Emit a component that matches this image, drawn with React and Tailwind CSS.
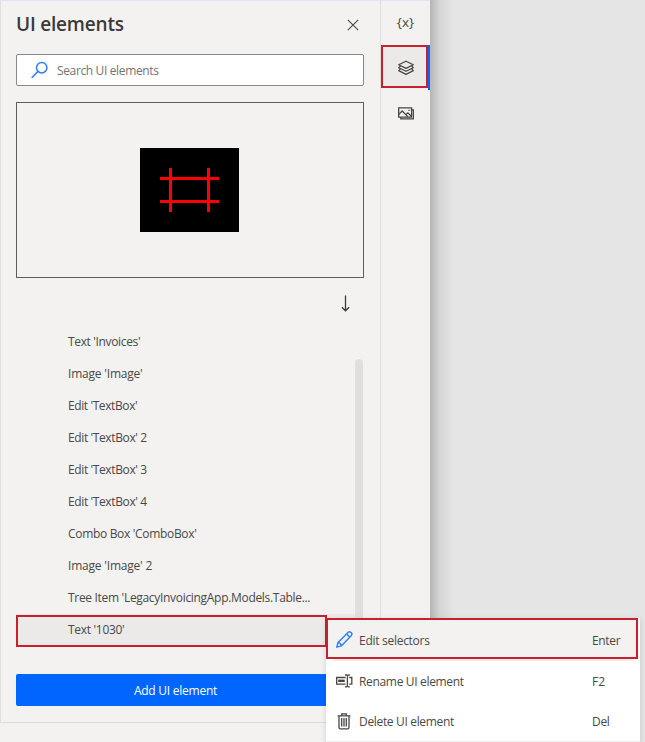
import React from "react";

const elements = [
  { label: "Text 'Invoices'", spacing: "tracking-[-0.35px]" },
  { label: "Image 'Image'", spacing: "tracking-[-0.2px]" },
  { label: "Edit 'TextBox'", spacing: "tracking-[-0.4px]" },
  { label: "Edit 'TextBox' 2", spacing: "tracking-[-0.38px]" },
  { label: "Edit 'TextBox' 3", spacing: "tracking-[-0.38px]" },
  { label: "Edit 'TextBox' 4", spacing: "tracking-[-0.38px]" },
  { label: "Combo Box 'ComboBox'", spacing: "tracking-[-0.32px]" },
  { label: "Image 'Image' 2", spacing: "tracking-[-0.2px]" },
  { label: "Tree Item 'LegacyInvoicingApp.Models.Table...", spacing: "tracking-[-0.31px]" },
];

function SearchIcon() {
  return (
    <svg width="18" height="18" viewBox="0 0 18 18" fill="none" stroke="#2b7fff" strokeWidth="1.5">
      <circle cx="10.7" cy="6.7" r="5.2" />
      <path d="M7 10.4.7 16.8" />
    </svg>
  );
}

function CloseIcon() {
  return (
    <svg width="12" height="12" viewBox="0 0 12 12" fill="none" stroke="#484644" strokeWidth="1.1">
      <path d="M.8.8l10.4 10.4M11.2.8.8 11.2" />
    </svg>
  );
}

function LayersIcon() {
  return (
    <svg width="16" height="16" viewBox="0 0 16 16" fill="none" stroke="#484644" strokeWidth="1.2" strokeLinejoin="round">
      <path d="M8 1.2 15.3 4.8 8 8.4.7 4.8Z" />
      <path d="M2.5 6 .7 7.7 8 11.3l7.3-3.6L13.5 6" />
      <path d="M2.5 8.9.7 10.6 8 14.4l7.3-3.8-1.8-1.7" />
    </svg>
  );
}

function ImagesIcon() {
  return (
    <svg width="16" height="13" viewBox="0 0 16 13" fill="none" stroke="#484644" strokeWidth="1.3">
      <path d="M.7.9h12.9v9.2H.7z" />
      <path d="M13.9 2.8h1.5v9.1H2.8v-1.7" />
      <path d="M.8 7.4 4.2 4l5.8 5.9M7.9 7.6l1.9-1.8 3.6 3.5" />
      <path d="M10.4 3.4h1.3" />
    </svg>
  );
}

function PencilIcon() {
  return (
    <svg width="17" height="17" viewBox="0 0 17 17" fill="none" stroke="#2b7fff" strokeWidth="1.4" strokeLinejoin="round">
      <path d="M.8 16.2 2 11.5 12 1.5c1-1 2.4-.8 3.2 0s1 2.1 0 3.2L5.3 14.9Z" />
      <path d="M10.6 3l3.3 3.2M2 11.5c1.8.2 3.1 1.5 3.3 3.4" />
    </svg>
  );
}

function RenameIcon() {
  return (
    <svg width="17" height="14" viewBox="0 0 17 14" fill="none" stroke="#484644" strokeWidth="1.3">
      <path d="M9.6 3.5H.7v6.6h8.9M13.2 3.5h2.6v6.6h-2.6" />
      <path d="M2.2 6.8h6.5" strokeWidth="2.4" />
      <path d="M9 1h1.5l.9.7.9-.7h1.5M11.4 1.7v10.4M9 12.8h1.5l.9-.7.9.7h1.5" />
    </svg>
  );
}

function TrashIcon() {
  return (
    <svg width="14" height="17" viewBox="0 0 14 17" fill="none" stroke="#484644" strokeWidth="1.3">
      <path d="M.6 2.9h12.8M4.7 2.6V.9h4.6v1.7M2 2.8v11.6c0 1 .4 1.5 1.5 1.5h7c1.1 0 1.5-.5 1.5-1.5V2.8" />
      <path d="M4.7 5v8.5M7 5v8.5M9.3 5v8.5" />
    </svg>
  );
}

export default function App() {
  return (
    <div className="relative flex h-[742px] w-[645px] overflow-hidden bg-[#e5e5e5] font-['Open_Sans',sans-serif] text-[12px] text-[#4a4846]">
      <div className="flex h-full w-[430px] shrink-0 flex-col border-t border-[#dfe5f1] bg-[#f3f2f1]">
        <div className="flex h-[722px] shrink-0 border-b border-[#dddcdb]">
          <div className="flex w-[381px] flex-col border-x border-[#e0dfde] pl-[15px]">
            <div className="flex h-[53px] items-start justify-between pr-[21px]">
              <h1 className="mt-[9px] text-[19px] font-semibold leading-7 tracking-[-0.2px] text-[#3b3a39]">UI elements</h1>
              <div className="mt-[18px]"><CloseIcon /></div>
            </div>
            <div className="flex h-8 w-[348px] shrink-0 items-center rounded-[2px] border border-[#8a8886] bg-white pl-[14px]">
              <SearchIcon />
              <span className="ml-2 pt-[2px] tracking-[-0.36px] text-[#757371]">Search UI elements</span>
            </div>
            <div className="mt-4 flex h-44 w-[348px] shrink-0 items-center justify-center border border-[#5f5d5b] pr-px">
              <svg width="99" height="84" viewBox="0 0 99 84">
                <rect width="99" height="84" fill="#000" />
                <path d="M20 30.5h59M20 53.5h59M30.5 20v44M68.5 20v44" stroke="#f00" strokeWidth="3" />
              </svg>
            </div>
            <div className="flex h-12 shrink-0 items-center justify-end pr-[29px] pt-[2px]">
              <svg width="10" height="17" viewBox="0 0 10 17" fill="none" stroke="#3b3a39" strokeWidth="1.3">
                <path d="M4.5.5v15.3M.9 12.2l3.6 3.6 3.6-3.6" />
              </svg>
            </div>
            <div className="flex h-[321px] shrink-0">
              <div className="flex w-[339px] flex-col">
                {elements.map((e) => (
                  <div key={e.label} className="flex h-8 shrink-0 items-center whitespace-pre pl-[52px]">
                    <span className={e.spacing}>{e.label}</span>
                  </div>
                ))}
                <div className="flex h-[33px] items-stretch bg-[#ebeae9]">
                  <div className="mt-px flex w-[311px] items-center border-2 border-[#c8202f] pb-[3px] pl-[50px] tracking-[-0.3px]">Text '1030'</div>
                </div>
              </div>
              <div className="mt-[33px] h-[288px] w-2 rounded-full bg-[#e1dfdd]" />
            </div>
            <div className="mt-[27px] flex h-8 w-[319px] items-center justify-center rounded-[2px] bg-[#0066ff] pt-[2px] text-white">
              <span className="tracking-[-0.25px]">Add UI element</span>
            </div>
          </div>
          <div className="flex w-[49px] flex-col">
            <div className="flex h-11 items-center justify-center pb-[2px] text-[13.5px] tracking-[0.1px]">{"{x}"}</div>
            <div className="flex h-[45px] border-r-2 border-[#0066ff]">
              <div className="flex h-[43px] w-[47px] items-center justify-center border-2 border-[#c8202f] bg-[#ebeae9] pl-[2px] pt-[2px]">
                <LayersIcon />
              </div>
            </div>
            <div className="flex h-[46px] items-center justify-center"><ImagesIcon /></div>
          </div>
        </div>
      </div>
      <div className="h-full w-6 bg-gradient-to-r from-[#b5b5b5] via-[#d5d5d5] via-40% to-[#e5e5e5]" />

      <div className="absolute left-[326px] top-[618px] flex h-[124px] w-[314px] flex-col bg-white tracking-[-0.33px] shadow-[0_2px_6px_rgba(0,0,0,0.14)]">
        <div className="flex h-[41px] w-[312px] shrink-0 items-center border-2 border-[#c8202f] bg-[#f3f2f1] pl-2 pt-[2px]">
          <PencilIcon />
          <span className="ml-[6px] w-[233px] pt-[2px] tracking-[-0.28px]">Edit selectors</span>
          <span className="pt-[2px]">Enter</span>
        </div>
        <div className="mx-[7px] h-[2px] shrink-0 bg-[#eeedec]" />
        <div className="flex h-10 shrink-0 items-center pl-[10px]">
          <RenameIcon />
          <span className="ml-[6px] w-[233px] pt-[2px]">Rename UI element</span>
          <span className="pt-[2px] tracking-normal">F2</span>
        </div>
        <div className="flex h-10 shrink-0 items-center pl-[11px]">
          <TrashIcon />
          <span className="ml-2 w-[233px] pt-[2px]">Delete UI element</span>
          <span className="pt-[2px]">Del</span>
        </div>
        <div className="h-px shrink-0 bg-[#eeeeee]" />
      </div>
    </div>
  );
}
